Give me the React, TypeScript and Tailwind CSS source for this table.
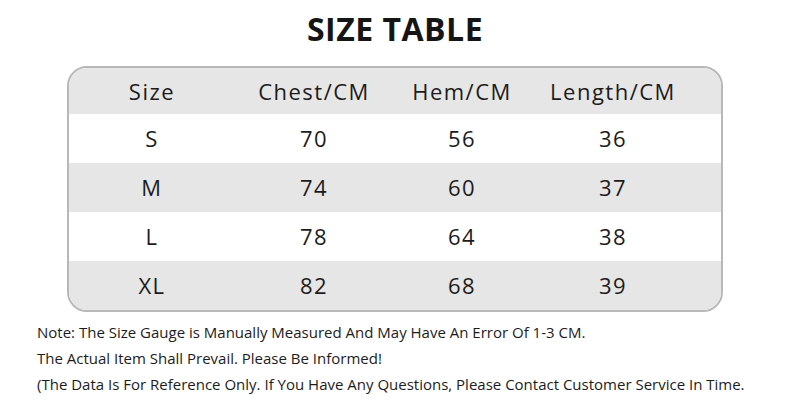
import React from "react";

type Row = { size: string; chest: string; hem: string; length: string };

const rows: Row[] = [
    { size: "S", chest: "70", hem: "56", length: "36" },
    { size: "M", chest: "74", hem: "60", length: "37" },
    { size: "L", chest: "78", hem: "64", length: "38" },
    { size: "XL", chest: "82", hem: "68", length: "39" },
];

const notes = [
    "Note: The Size Gauge is Manually Measured And May Have An Error Of 1-3 CM.",
    "The Actual Item Shall Prevail. Please Be Informed!",
    "(The Data Is For Reference Only. If You Have Any Questions, Please Contact Customer Service In Time.",
];

const TableRow = ({ cells, className }: { cells: string[]; className: string }) => (
    <div className={`grid grid-cols-[166px_158px_138px_164px_1fr] items-center ${className}`}>
        {cells.map((c, i) => (
            <div key={i} className="text-center text-[22px] tracking-[1.5px]">{c}</div>
        ))}
        <div />
    </div>
);

export default function App() {
    return (
        <div
            className="w-[790px] h-[414px] bg-white text-[#1c1c1c] overflow-hidden"
            style={{ fontFamily: '"Open Sans", "Noto Sans", sans-serif' }}
        >
            <h1 className="pt-[9px] h-[58px] text-center text-[32px] font-bold leading-[40px] tracking-[0.5px] text-[#151515]">
                SIZE TABLE
            </h1>
            <div className="mx-[67px] mt-[8px] w-[656px] rounded-[20px] border-2 border-[#b8b8b8] overflow-hidden">
                <TableRow cells={["Size", "Chest/CM", "Hem/CM", "Length/CM"]} className="h-[46px] bg-[#e6e6e6]" />
                {rows.map((r, i) => (
                    <TableRow
                        key={r.size}
                        cells={[r.size, r.chest, r.hem, r.length]}
                        className={`h-[49px] ${i % 2 === 0 ? "bg-white" : "bg-[#e6e6e6]"}`}
                    />
                ))}
            </div>
            <div className="pl-[37px] pt-[7px] text-[15px] leading-[26px] tracking-[0px] text-[#1c1c1c]">
                {notes.map((n) => (
                    <div key={n}>{n}</div>
                ))}
            </div>
        </div>
    );
}
